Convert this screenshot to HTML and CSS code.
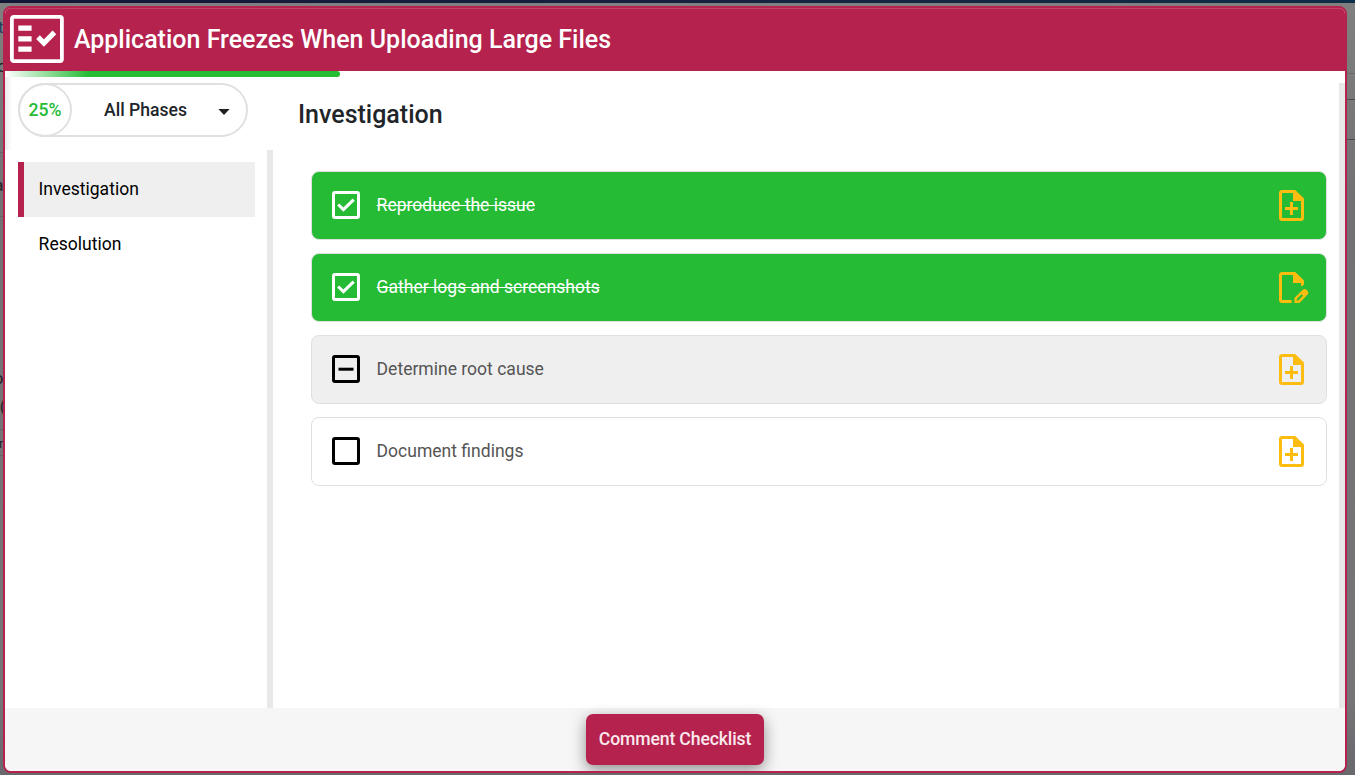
FILE: index.html
```html
<!DOCTYPE html>
<html lang="en">
<head>
<meta charset="utf-8">
<title>Checklist</title>
<link rel="stylesheet" href="styles.css">
</head>
<body>
<svg class="defs" width="0" height="0">
  <symbol id="note-add" viewBox="0 0 31 31">
    <path d="M15.5 1.5H3.2Q1.5 1.5 1.5 3.2V27.8Q1.5 29.5 3.2 29.5H21.8Q23.5 29.5 23.5 27.8V9.5" fill="none" stroke="currentColor" stroke-width="3"/>
    <path d="M14 0H16.2L25 8.5V11H14Z" fill="currentColor"/>
    <path d="M12.5 12v13M6 18.5h13" fill="none" stroke="currentColor" stroke-width="3"/>
  </symbol>
  <symbol id="note-edit" viewBox="0 0 31 31">
    <path d="M15.5 1.5H3.2Q1.5 1.5 1.5 3.2V27.8Q1.5 29.5 3.2 29.5H12.6" fill="none" stroke="currentColor" stroke-width="3"/>
    <path d="M14 0H16.2L25 8.5V12.3L23.4 14H22V11H14Z" fill="currentColor"/>
    <path fill-rule="evenodd" fill="currentColor" d="M15.4 31V26L23.8 17.8Q25.6 16.2 27.4 17.8L28.8 19.2Q30.2 20.9 28.6 22.6L20.4 31ZM17.8 28.6H19.3L24.1 23.8L22.6 22.3L17.8 27.1Z"/>
  </symbol>
  <symbol id="box" viewBox="0 0 28 28">
    <rect x="1.5" y="1.5" width="25" height="25" rx="1.5" fill="none" stroke="currentColor" stroke-width="3"/>
  </symbol>
</svg>
<div class="page">
  <div class="topbar"></div>
  <i class="rule r1"></i><i class="rule r2"></i><i class="rule r3"></i><i class="rule r4"></i><i class="rule r5"></i><i class="rule r6"></i><i class="rule r7"></i>
  <span class="peek p1">t</span><span class="peek p2">o</span><span class="peek p3">a</span><span class="peek p4">o</span><span class="peek p5">(</span><span class="peek p6">r</span>
  <div class="modal">
    <header class="head">
      <svg class="logo" width="54" height="48" viewBox="0 0 54 48">
        <rect x="1.9" y="1.9" width="50" height="44.2" rx="1.8" fill="none" stroke="#fff" stroke-width="3.8"/>
        <path d="M8.3 13.1h13.3M8.3 23.8h13.3M8.3 34.2h13.3" stroke="#fff" stroke-width="5.3"/>
        <path d="M28 22.2l5.9 5.8L44.4 17.4" fill="none" stroke="#fff" stroke-width="5.2"/>
      </svg>
      <h1>Application Freezes When Uploading Large Files</h1>
    </header>
    <div class="body">
      <div class="progress"></div>
      <aside class="side">
        <div class="side-top">
          <div class="picker">
            <span class="pct">25%</span>
            <span class="phase">All Phases</span>
            <svg width="12" height="6" viewBox="0 0 12 6"><path d="M.4 0h11.2L6 6z" fill="#222"/></svg>
          </div>
        </div>
        <nav class="nav">
          <div class="nav-item active">Investigation</div>
          <div class="nav-item">Resolution</div>
        </nav>
      </aside>
      <main class="main">
        <h2>Investigation</h2>
        <div class="list">
          <div class="task done">
            <svg class="check" width="28" height="28"><use href="#box"/><path d="M6.2 13.5l5.2 5.1L21.7 8.6" fill="none" stroke="currentColor" stroke-width="3.1"/></svg>
            <span>Reproduce the issue</span>
            <svg class="note" width="31" height="31"><use href="#note-add"/></svg>
          </div>
          <div class="task done">
            <svg class="check" width="28" height="28"><use href="#box"/><path d="M6.2 13.5l5.2 5.1L21.7 8.6" fill="none" stroke="currentColor" stroke-width="3.1"/></svg>
            <span>Gather logs and screenshots</span>
            <svg class="note" width="31" height="31"><use href="#note-edit"/></svg>
          </div>
          <div class="task partial">
            <svg class="check" width="28" height="28"><use href="#box"/><path d="M6.5 14.2h15" stroke="currentColor" stroke-width="3"/></svg>
            <span>Determine root cause</span>
            <svg class="note" width="31" height="31"><use href="#note-add"/></svg>
          </div>
          <div class="task">
            <svg class="check" width="28" height="28"><use href="#box"/></svg>
            <span>Document findings</span>
            <svg class="note" width="31" height="31"><use href="#note-add"/></svg>
          </div>
        </div>
      </main>
    </div>
    <footer class="foot"><button class="comment">Comment Checklist</button></footer>
  </div>
</div>
</body>
</html>
```
FILE: styles.css
```css
* { box-sizing: border-box; }
body { margin: 0; font-family: Roboto, "Liberation Sans", sans-serif; color: #212529; }
.defs { position: absolute; }
.page { position: relative; width: 1355px; height: 775px; overflow: hidden; padding: 5.5px 8px 0 3px; background: linear-gradient(#808080, #727274 25%, #757577 90%, #68686d); }
.topbar { position: absolute; left: 0; top: 0; width: 100%; height: 3px; background: linear-gradient(90deg, #131735, #15243f 60%, #0e2d47); }
.rule { position: absolute; height: 1px; width: 12px; left: 1343px; background: #4b4b4b; }
.r1 { top: 73px; background: #6b6b6b; }
.r2 { top: 99px; }
.r3 { top: 139px; }
.r4, .r5, .r6, .r7 { left: 0; background: #636366; }
.r4 { top: 152px; }
.r5 { top: 216px; }
.r6 { top: 429px; }
.r7 { top: 455px; }
.peek { position: absolute; right: 1351.5px; font-size: 17px; line-height: 20px; color: #222226; }
.p1 { top: 17px; color: #263c5c; }
.p2 { top: 56px; right: 1348px; }
.p3 { top: 175px; }
.p4 { top: 368px; }
.p5 { top: 396px; right: 1349.5px; }
.p6 { top: 434px; font-size: 13px; }
.modal { position: relative; display: flex; flex-direction: column; width: 1344px; height: 767.5px; border: 2px solid #b5224d; border-radius: 8px; background: #fff; overflow: hidden; }
.head { flex: 0 0 63px; display: flex; align-items: center; gap: 10.4px; padding: 0 4.5px; background: #b5224d; box-shadow: inset 0 1px #bd4468; color: #fff; }
.logo { flex: none; }
h1 { margin: 0; padding-top: 2px; font-size: 25px; line-height: 30px; font-weight: 500; white-space: nowrap; }
.body { position: relative; flex: 1; display: flex; min-height: 0; }
.progress { position: absolute; left: 0; top: 0; width: 335px; height: 6px; border-radius: 0 3px 3px 0; background: linear-gradient(90deg, #fff, #25bb35 25%); }
.side { width: 268px; display: flex; flex-direction: column; }
.side-top { height: 79px; padding: 12px 0 0 13px; background: linear-gradient(90deg, #e9eaeb, #fff 7px); }
.picker { width: 230px; height: 54px; border: 2px solid #dfe1e1; border-radius: 27px; display: flex; align-items: center; background: #fff; font-weight: 500; font-size: 17.6px; }
.pct { width: 54px; height: 54px; margin-left: -2px; border: 2px solid #dfe1e1; border-radius: 50%; display: flex; align-items: center; justify-content: center; color: #25bb35; }
.phase { margin: 0 31px 0 32px; white-space: nowrap; }
.picker svg { margin-top: 4px; }
.nav { flex: 1; padding: 12px 12px 0 13px; border-right: 6px solid #e8e8e8; color: #000; }
.nav-item { height: 55px; padding: 0 0 1px 14.6px; border-left: 6px solid transparent; display: flex; align-items: center; font-size: 17.55px; }
.active { background: #efefef; border-left-color: #b5224d; }
.main { flex: 1; padding: 27.5px 18px 0 25px; background: linear-gradient(#e8e8e8, #e8e8e8) right 12px / 6px 100% no-repeat; }
h2 { margin: 0; font-size: 25px; line-height: 34px; font-weight: 500; }
.list { display: flex; flex-direction: column; gap: 13.5px; padding: 39px 0 0 13px; }
.task { height: 68.5px; display: flex; align-items: center; padding: 0 16px 1.5px 19.5px; border: 1px solid #e0e0e0; border-radius: 8px; font-size: 17.55px; color: #555; }
.task span { flex: 1; margin-left: 17.1px; }
.check { color: #000; }
.note { color: #fdbd10; margin-top: 1px; }
.done { background: #25bb35; color: #fff; }
.done span { text-decoration: line-through; }
.done .check { color: #fff; }
.partial { background: #efefef; }
.foot { flex: 0 0 63px; display: flex; justify-content: center; align-items: flex-start; padding-top: 6px; background: #f6f6f6; }
.comment { width: 178px; height: 51px; padding: 0 0 2px; border: 0; border-radius: 7px; background: #b5224d; box-shadow: 0 5px 15px rgba(0,0,0,.42); color: #fbe9ee; font: 500 17.6px Roboto, sans-serif; letter-spacing: -.12px; }
```
